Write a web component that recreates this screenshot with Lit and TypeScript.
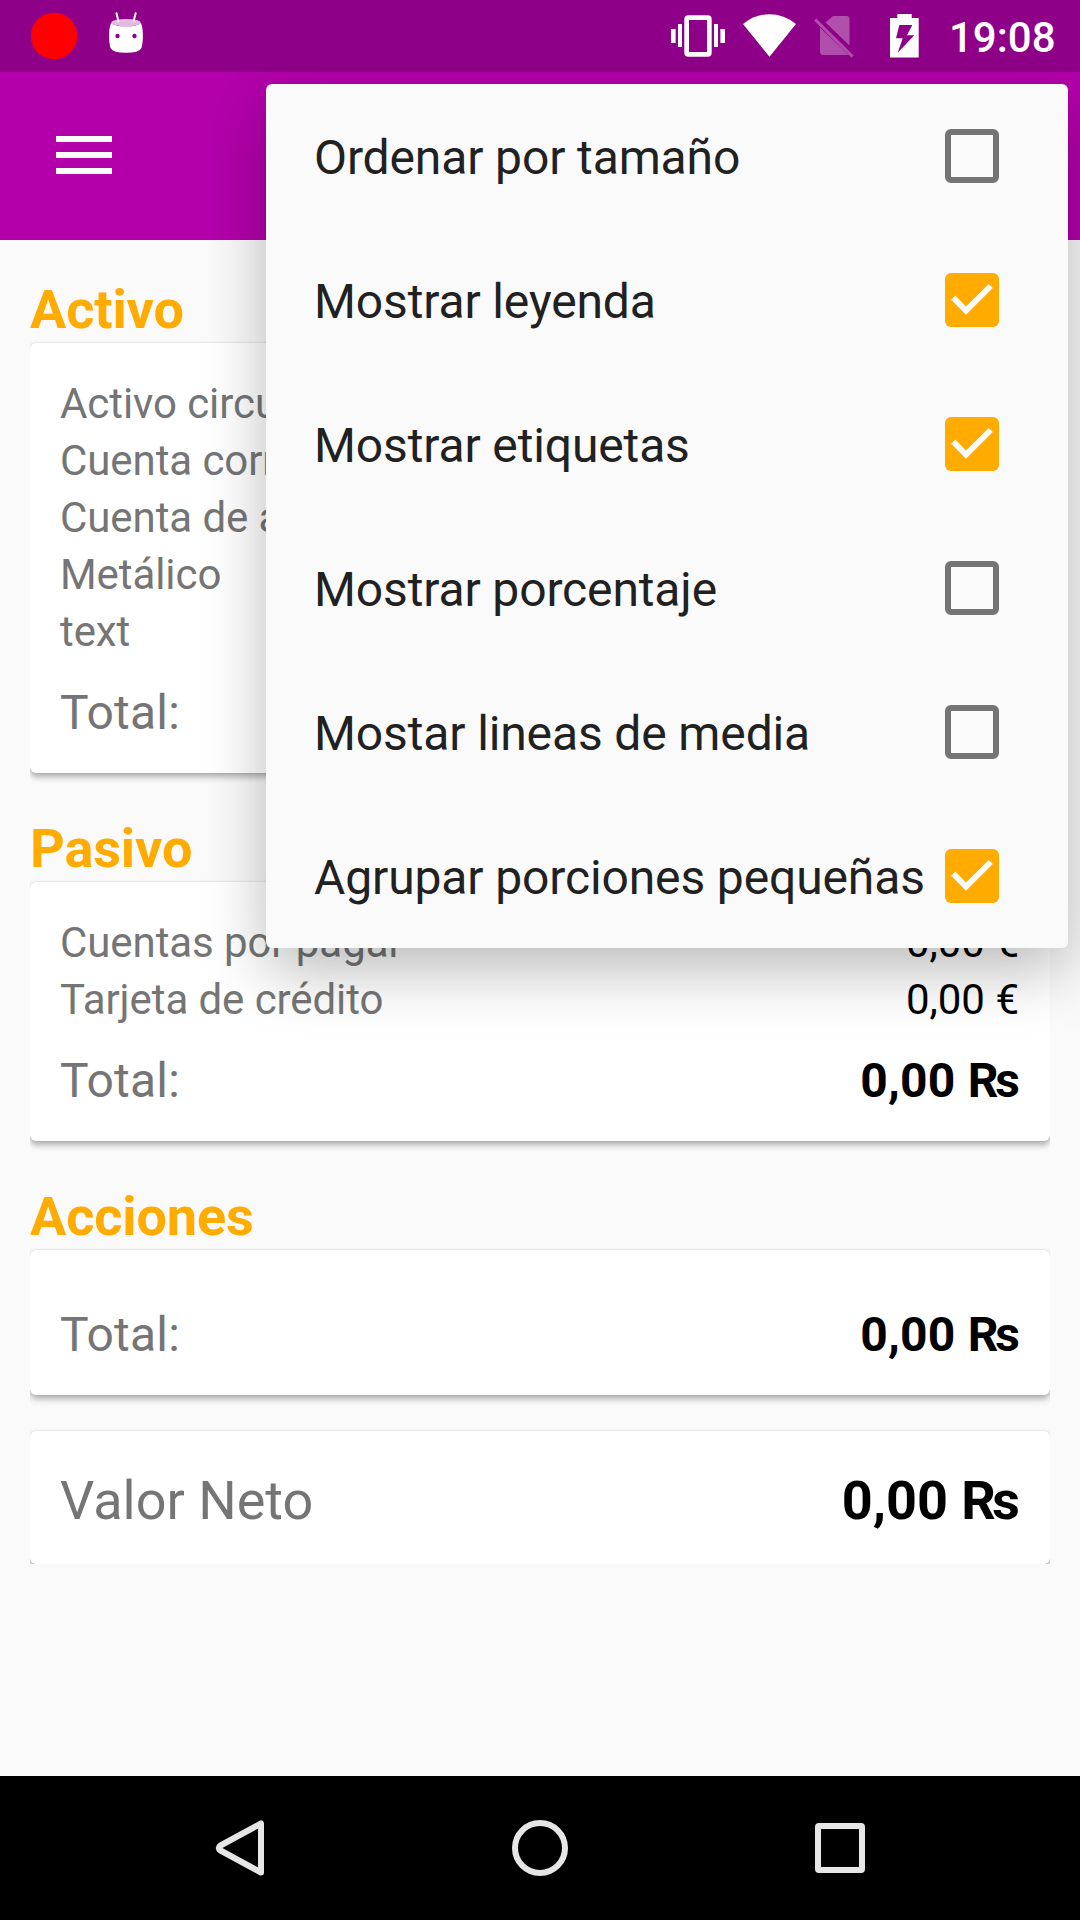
import { LitElement, html, css, nothing } from "lit";
import { customElement, property } from "lit/decorators.js";

interface Account {
  name: string;
  amount: string;
}

interface Section {
  title: string;
  accounts: Account[];
  total: string;
}

const SECTIONS: Section[] = [
  {
    title: "Activo",
    accounts: [
      { name: "Activo circulante", amount: "0,00 €" },
      { name: "Cuenta corriente", amount: "0,00 €" },
      { name: "Cuenta de ahorro", amount: "0,00 €" },
      { name: "Metálico", amount: "0,00 €" },
      { name: "text", amount: "0,00 €" },
    ],
    total: "0,00 ₨",
  },
  {
    title: "Pasivo",
    accounts: [
      { name: "Cuentas por pagar", amount: "0,00 €" },
      { name: "Tarjeta de crédito", amount: "0,00 €" },
    ],
    total: "0,00 ₨",
  },
  { title: "Acciones", accounts: [], total: "0,00 ₨" },
];

const OPTIONS = [
  { label: "Ordenar por tamaño", checked: false },
  { label: "Mostrar leyenda", checked: true },
  { label: "Mostrar etiquetas", checked: true },
  { label: "Mostrar porcentaje", checked: false },
  { label: "Mostar lineas de media", checked: false },
  { label: "Agrupar porciones pequeñas", checked: true },
];

@customElement("status-bar")
export class StatusBar extends LitElement {
  static styles = css`
    :host {
      display: flex;
      justify-content: space-between;
      height: 72px;
      background: #8f0089;
      color: #fff;
    }
    svg {
      display: block;
    }
    .right {
      display: flex;
    }
    .clock {
      width: 131px;
      padding-top: 13px;
      box-sizing: border-box;
      font-size: 42px;
      font-weight: 500;
      line-height: 49px;
    }
  `;

  render() {
    return html`
      <svg width="160" height="72" viewBox="0 0 160 72">
        <circle cx="54" cy="36" r="23.2" fill="#f00" />
        <g transform="scale(.33333)">
          <path
            fill="#fff"
            d="M333 69Q345 79 378 79T423 69C431 88 430 126 424 145Q417 158.500 378 158.500T332 145C326 126 325 88 333 69Z"
          />
          <ellipse cx="378" cy="68" rx="44" ry="11" fill="#e3bbe1" />
          <path
            d="M349.500 40L355 63M407 40L401 63"
            stroke="#fff"
            stroke-width="6"
            stroke-linecap="round"
          />
          <circle cx="352.500" cy="108" r="6.500" fill="#8f0089" />
          <circle cx="403.500" cy="108" r="6.500" fill="#8f0089" />
        </g>
      </svg>
      <div class="right">
        <svg width="309" height="72" viewBox="640 0 309 72" fill="#fff">
          <path
            d="M671 29h4.600v14H671zM678 24h4v23h-4zM714 24h4v23h-4zM720.400 29h4.600v14h-4.600z"
          />
          <path
            fill-rule="evenodd"
            d="M688.300 15.300h19.400a4 4 0 0 1 4 4v33.400a4 4 0 0 1-4 4h-19.400a4 4 0 0 1-4-4V19.300a4 4 0 0 1 4-4zM689 20v32h18V20z"
          />
          <path d="M769.500 56.800L743 24Q755 14.200 769.500 14.200T796 24Z" />
          <g fill="#b04fac">
            <path
              d="M833 16h13.500a3 3 0 0 1 3 3v26.500L825.500 22.500zM820 27.500L848.500 55H823.500a3.500 3.500 0 0 1-3.500-3.500z"
            />
            <path d="M816.200 18.400L853.700 55.400L851.500 57.700L814.300 20.700z" />
          </g>
          <path
            fill-rule="evenodd"
            d="M897.300 14h14.400v4h7v39.400H890V18h7.300zM899.300 25L896 38.300h6.700L897.700 52.700L914.300 35.300H907L912.300 25z"
          />
        </svg>
        <div class="clock">19:08</div>
      </div>
    `;
  }
}

@customElement("balance-card")
export class BalanceCard extends LitElement {
  @property({ attribute: false }) section!: Section;

  static styles = css`
    :host {
      display: block;
    }
    .title {
      margin: 0 0 2px;
      font-size: 54px;
      line-height: 63px;
      font-weight: 700;
      letter-spacing: -0.1px;
      color: #ffab00;
    }
    .card {
      padding: 32px 30px;
      background: #fff;
      border-radius: 6px;
      box-shadow: 0 4px 6px rgba(0, 0, 0, 0.3), 0 0 2px rgba(0, 0, 0, 0.16);
      clip-path: inset(-6px 0 -14px 0);
    }
    .row {
      display: flex;
      justify-content: space-between;
      font-size: 42px;
      line-height: 57px;
      color: #757575;
    }
    .row span:first-child {
      letter-spacing: -0.08px;
    }
    .row span:last-child {
      margin-right: 1px;
      color: #000;
    }
    .total {
      margin-top: 24px;
      font-size: 48px;
    }
    .row.total span:first-child {
      letter-spacing: 0.2px;
    }
    .row.total span:last-child {
      margin-right: 0;
      font-weight: 700;
      letter-spacing: 0.2px;
    }
  `;

  render() {
    const { title, accounts, total } = this.section;
    return html`
      <h2 class="title">${title}</h2>
      <div class="card">
        ${accounts.map(
          (a) => html`<div class="row"><span>${a.name}</span><span>${a.amount}</span></div>`
        )}
        <div class="row total"><span>Total:</span><span>${total}</span></div>
      </div>
    `;
  }
}

@customElement("check-option")
export class CheckOption extends LitElement {
  @property() label = "";
  @property({ type: Boolean }) checked = false;

  static styles = css`
    :host {
      display: flex;
      align-items: center;
      justify-content: space-between;
      height: 144px;
      padding: 0 69px 0 48px;
      box-sizing: border-box;
      color: #212121;
      font-size: 48px;
      line-height: 57px;
      letter-spacing: -0.13px;
      white-space: nowrap;
    }
    .label {
      padding-top: 3px;
    }
    .box {
      width: 54px;
      height: 54px;
      box-sizing: border-box;
      flex: none;
      border: 6px solid #757575;
      border-radius: 6px;
    }
    .box.on {
      border: 0;
      background: #ffab00;
    }
    svg {
      display: block;
    }
  `;

  render() {
    return html`
      <span class="label">${this.label}</span>
      <span class="box ${this.checked ? "on" : ""}">
        ${this.checked
          ? html`<svg width="54" height="54" viewBox="0 0 54 54">
              <path
                fill="#fafafa"
                d="M6.200 26.700L10.300 22.600L21 33.500L43.700 11L47.800 14.900L21 41.700z"
              />
            </svg>`
          : nothing}
      </span>
    `;
  }
}

@customElement("app-root")
export class AppRoot extends LitElement {
  static styles = css`
    :host {
      display: flex;
      flex-direction: column;
      position: relative;
      width: 1080px;
      height: 1920px;
      overflow: hidden;
      background: #fafafa;
      font-family: Roboto, "Liberation Sans", sans-serif;
    }
    .toolbar {
      height: 168px;
      box-sizing: border-box;
      padding: 64px 56px;
      background: #b300ab;
    }
    svg {
      display: block;
    }
    .content {
      flex: 1;
      display: flex;
      flex-direction: column;
      gap: 44px;
      padding: 38px 30px 0;
    }
    .net {
      display: flex;
      justify-content: space-between;
      height: 133px;
      box-sizing: border-box;
      margin-top: -8px;
      padding: 38px 30px 32px;
      background: #fff;
      border-radius: 6px;
      box-shadow: 0 4px 6px rgba(0, 0, 0, 0.3), 0 0 2px rgba(0, 0, 0, 0.16);
      clip-path: inset(-6px 0 0 0);
      font-size: 54px;
      line-height: 63px;
      color: #757575;
    }
    .net strong {
      color: #000;
    }
    .menu {
      position: absolute;
      top: 84px;
      left: 266px;
      width: 802px;
      background: #fafafa;
      border-radius: 6px;
      box-shadow: 0 22px 62px rgba(0, 0, 0, 0.27);
    }
    .nav {
      display: flex;
      align-items: center;
      justify-content: center;
      gap: 240px;
      height: 144px;
      background: #000;
    }
  `;

  render() {
    return html`
      <status-bar></status-bar>
      <header class="toolbar">
        <svg width="56" height="38" viewBox="0 0 56 38">
          <path d="M0 0h56v6H0zM0 16h56v6H0zM0 32h56v6H0z" fill="#fff" />
        </svg>
      </header>
      <main class="content">
        ${SECTIONS.map((s) => html`<balance-card .section=${s}></balance-card>`)}
        <div class="net"><span>Valor Neto</span><strong>0,00 ₨</strong></div>
      </main>
      <nav class="nav">
        <svg width="60" height="60" viewBox="210 1818 60 60">
          <path
            d="M261 1823.500V1872.500L220.500 1850.500Q217 1848 220.500 1845.500Z"
            fill="none"
            stroke="#e6e6e6"
            stroke-width="6"
            stroke-linejoin="round"
          />
        </svg>
        <svg width="60" height="60" viewBox="0 0 60 60">
          <circle cx="30" cy="30" r="25" fill="none" stroke="#e6e6e6" stroke-width="6" />
        </svg>
        <svg width="60" height="60" viewBox="0 0 60 60">
          <rect
            x="8"
            y="8"
            width="44"
            height="44"
            rx="1"
            fill="none"
            stroke="#e6e6e6"
            stroke-width="6"
          />
        </svg>
      </nav>
      <div class="menu">
        ${OPTIONS.map(
          (o) => html`<check-option .label=${o.label} ?checked=${o.checked}></check-option>`
        )}
      </div>
    `;
  }
}
